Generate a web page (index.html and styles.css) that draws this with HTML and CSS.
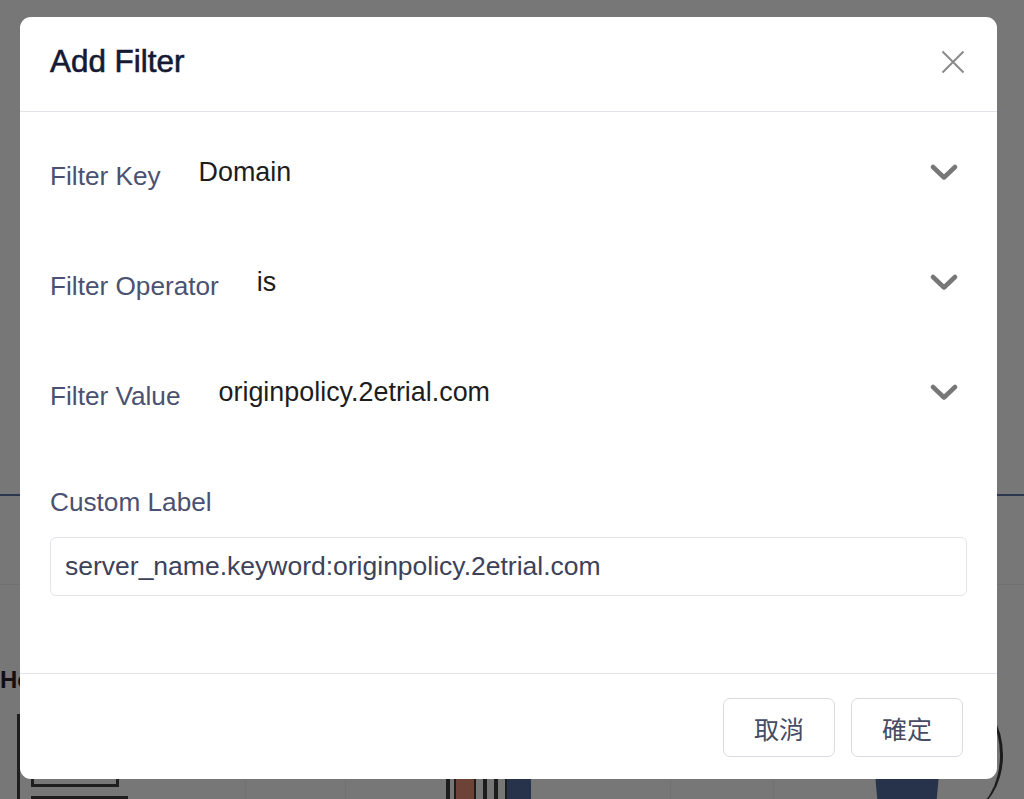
FILE: index.html
```html
<!DOCTYPE html>
<html lang="en">
<head>
<meta charset="utf-8">
<title>Add Filter</title>
<link rel="stylesheet" href="styles.css">
</head>
<body>
<div class="page">
  <div class="bg-line bg-line-navy"></div>
  <div class="bg-line bg-line-faint"></div>
  <div class="bg-text">Ho</div>
  <div class="bg-axis"></div>
  <div class="bg-box"></div>
  <div class="bg-box-line"></div>
  <div class="bg-bars">
    <span class="bar dark thin"></span>
    <span class="bar rust"></span>
    <span class="bar dark thin"></span>
    <span class="bar dark thin"></span>
    <span class="bar navy"></span>
  </div>
  <div class="bg-vline v1"></div>
  <div class="bg-vline v2"></div>
  <div class="bg-vline v3"></div>
  <div class="bg-vline v4"></div>
  <div class="bg-figure"></div>
  <div class="bg-arc"></div>
</div>

<div class="modal">
  <div class="modal-header">
    <h1 class="modal-title">Add Filter</h1>
    <button class="close-btn" aria-label="Close">
      <svg width="24" height="24" viewBox="0 0 24 24"><path d="M1.5 1.5 L22.5 22.5 M22.5 1.5 L1.5 22.5" stroke="#8a8a8a" stroke-width="2" fill="none"/></svg>
    </button>
  </div>
  <div class="modal-body">
    <div class="field-row">
      <span class="field-label">Filter Key</span>
      <span class="field-value">Domain</span>
      <svg class="chevron" width="28" height="18" viewBox="0 0 28 18"><path d="M3 3 L14 13.5 L25 3" stroke="#777" stroke-width="4.5" fill="none" stroke-linecap="round" stroke-linejoin="round"/></svg>
    </div>
    <div class="field-row">
      <span class="field-label">Filter Operator</span>
      <span class="field-value">is</span>
      <svg class="chevron" width="28" height="18" viewBox="0 0 28 18"><path d="M3 3 L14 13.5 L25 3" stroke="#777" stroke-width="4.5" fill="none" stroke-linecap="round" stroke-linejoin="round"/></svg>
    </div>
    <div class="field-row">
      <span class="field-label">Filter Value</span>
      <span class="field-value">originpolicy.2etrial.com</span>
      <svg class="chevron" width="28" height="18" viewBox="0 0 28 18"><path d="M3 3 L14 13.5 L25 3" stroke="#777" stroke-width="4.5" fill="none" stroke-linecap="round" stroke-linejoin="round"/></svg>
    </div>
    <div class="custom-block">
      <label class="custom-label">Custom Label</label>
      <div class="text-input">server_name.keyword:originpolicy.2etrial.com</div>
    </div>
  </div>
  <div class="modal-footer">
    <button class="btn">取消</button>
    <button class="btn">確定</button>
  </div>
</div>
</body>
</html>
```

FILE: styles.css
```css
html, body {
  margin: 0;
  padding: 0;
}
body {
  width: 1024px;
  height: 799px;
  overflow: hidden;
  background: #777777;
  font-family: "Liberation Sans", Arial, "Noto Sans CJK TC", sans-serif;
  position: relative;
}

/* dimmed page behind the modal */
.page {
  position: absolute;
  inset: 0;
}
.bg-line {
  position: absolute;
  left: 0;
  right: 0;
}
.bg-line-navy {
  top: 494px;
  height: 2px;
  background: #2b3650;
}
.bg-line-faint {
  top: 584px;
  height: 1px;
  background: #707070;
}
.bg-text {
  position: absolute;
  left: 0;
  top: 666px;
  font-size: 24px;
  font-weight: 700;
  color: #111;
}
.bg-axis {
  position: absolute;
  left: 17px;
  top: 714px;
  width: 3px;
  height: 90px;
  background: #1e1e1e;
}
.bg-box {
  position: absolute;
  left: 31px;
  top: 770px;
  width: 82px;
  height: 14px;
  border: 3px solid #1e1e1e;
  border-top: none;
}
.bg-box-line {
  position: absolute;
  left: 31px;
  top: 796px;
  width: 97px;
  height: 3px;
  background: #1e1e1e;
}
.bg-bars {
  position: absolute;
  left: 446px;
  top: 779px;
  height: 20px;
  display: flex;
  gap: 7px;
}
.bar {
  height: 20px;
}
.bar.thin {
  width: 4px;
}
.bar.dark {
  background: #1c1c1c;
}
.bar.rust {
  width: 18px;
  background: #6d4337;
  border-left: 2px solid #1c1c1c;
  border-right: 2px solid #1c1c1c;
  box-sizing: content-box;
  margin-left: -3px;
}
.bar.navy {
  width: 24px;
  background: #26334a;
  border-left: 2px solid #1c1c1c;
}
.bg-vline {
  position: absolute;
  top: 779px;
  width: 1px;
  height: 20px;
  background: #717171;
}
.v1 { left: 245px; }
.v2 { left: 345px; }
.v3 { left: 670px; }
.v4 { left: 773px; }
.bg-figure {
  position: absolute;
  left: 872px;
  top: 740px;
  width: 66px;
  height: 90px;
  background: #26334a;
  border: 2px solid #1c1c1c;
  border-radius: 0 0 40px 40px / 0 0 60px 60px;
  clip-path: polygon(0 0, 100% 0, 88% 100%, 12% 100%);
}
.bg-arc {
  position: absolute;
  left: 960px;
  top: 700px;
  width: 40px;
  height: 110px;
  border-right: 3px solid #1c1c1c;
  border-radius: 0 40px 40px 0 / 0 60px 60px 0;
}

/* modal */
.modal {
  position: absolute;
  left: 20px;
  top: 17px;
  width: 977px;
  height: 762px;
  background: #ffffff;
  border-radius: 11px;
  display: flex;
  flex-direction: column;
  box-sizing: border-box;
  overflow: hidden;
}
.modal-header {
  height: 95px;
  flex: none;
  box-sizing: border-box;
  border-bottom: 1px solid #e2e4ec;
  display: flex;
  align-items: center;
  justify-content: space-between;
  padding: 0 32px 4px 30px;
}
.modal-title {
  margin: 0;
  font-size: 31.4px;
  font-weight: 400;
  color: #151933;
  -webkit-text-stroke: 0.6px #151933;
}
.close-btn {
  border: none;
  background: none;
  padding: 0;
  width: 24px;
  height: 24px;
  display: flex;
  cursor: pointer;
}

.modal-body {
  flex: 1;
  padding: 31px 30px 0 30px;
  display: flex;
  flex-direction: column;
}
.field-row {
  height: 60px;
  display: flex;
  align-items: center;
  margin-bottom: 50px;
}
.field-row:nth-child(3) {
  margin-bottom: 64px;
}
.field-label {
  font-size: 26.2px;
  color: #4b5170;
  padding-top: 7px;
  margin-right: 38px;
}
.field-value {
  flex: 1;
  font-size: 26.9px;
  color: #1d1d1d;
  padding-bottom: 1px;
}
.chevron {
  flex: none;
  margin-right: 9px;
}
.custom-block {
  display: flex;
  flex-direction: column;
}
.custom-label {
  font-size: 26.2px;
  line-height: 30px;
  color: #4b5170;
  margin-bottom: 20px;
}
.text-input {
  height: 59px;
  box-sizing: border-box;
  border: 1px solid #e2e4ea;
  border-radius: 6px;
  padding: 0 14px;
  display: flex;
  align-items: center;
  font-size: 26.5px;
  color: #3d4259;
}

.modal-footer {
  height: 106px;
  flex: none;
  box-sizing: border-box;
  border-top: 1px solid #e2e4ec;
  display: flex;
  justify-content: flex-end;
  align-items: flex-start;
  gap: 16px;
  padding: 24px 34px 0 0;
}
.btn {
  width: 112px;
  height: 59px;
  box-sizing: border-box;
  border: 1px solid #d9dbe3;
  border-radius: 7px;
  background: #ffffff;
  font-family: "Noto Sans CJK TC", "Noto Sans CJK SC", sans-serif;
  font-size: 25px;
  color: #474c63;
  cursor: pointer;
  padding: 0;
}
```
